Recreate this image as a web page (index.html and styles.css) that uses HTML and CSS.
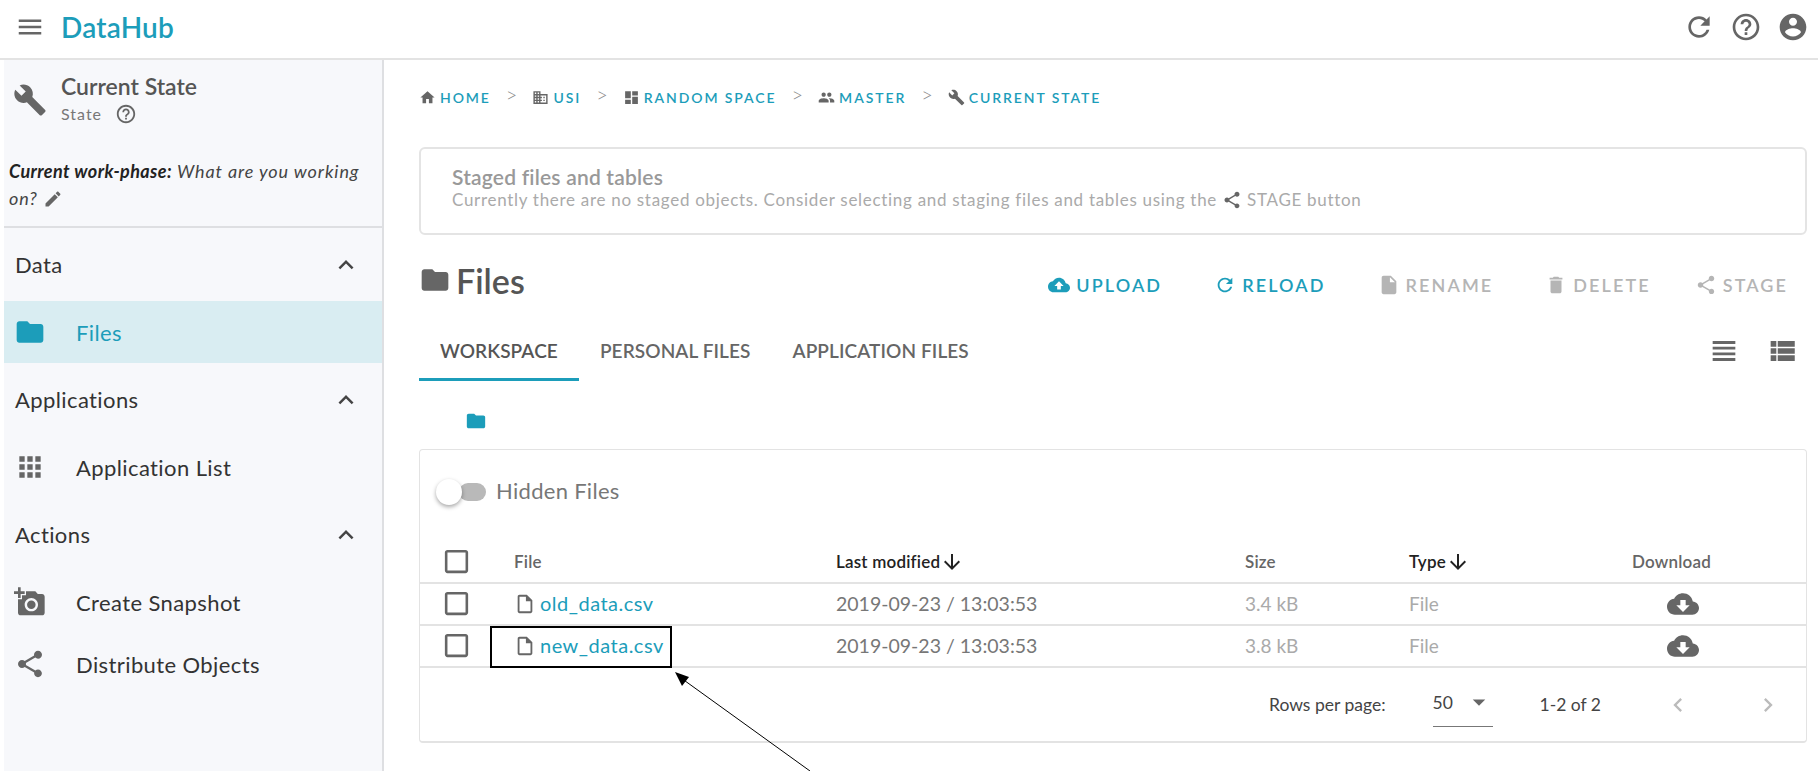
FILE: index.html
```html
<!DOCTYPE html>
<html>
<head>
    <title>DataHub</title>
    <link rel="stylesheet" href="styles.css">
</head>
<body>
    <svg class="sprite" xmlns="http://www.w3.org/2000/svg">
        <symbol id="i-menu" viewBox="0 0 24 24"><path d="M3 18h18v-2H3v2zm0-5h18v-2H3v2zm0-7v2h18V6H3z"/></symbol>
        <symbol id="i-refresh" viewBox="0 0 24 24"><path d="M17.65 6.35C16.2 4.9 14.21 4 12 4c-4.42 0-7.99 3.58-7.99 8s3.57 8 7.99 8c3.73 0 6.84-2.55 7.73-6h-2.08c-.82 2.33-3.04 4-5.65 4-3.31 0-6-2.69-6-6s2.69-6 6-6c1.66 0 3.14.69 4.22 1.78L13 11h7V4l-2.35 2.35z"/></symbol>
        <symbol id="i-help" viewBox="0 0 24 24"><path d="M11 18h2v-2h-2v2zm1-16C6.48 2 2 6.48 2 12s4.48 10 10 10 10-4.48 10-10S17.52 2 12 2zm0 18c-4.41 0-8-3.59-8-8s3.59-8 8-8 8 3.59 8 8-3.59 8-8 8zm0-14c-2.21 0-4 1.79-4 4h2c0-1.1.9-2 2-2s2 .9 2 2c0 2-3 1.75-3 5h2c0-2.25 3-2.5 3-5 0-2.21-1.79-4-4-4z"/></symbol>
        <symbol id="i-account" viewBox="0 0 24 24"><path d="M12 2C6.48 2 2 6.48 2 12s4.48 10 10 10 10-4.48 10-10S17.52 2 12 2zm0 3c1.66 0 3 1.34 3 3s-1.34 3-3 3-3-1.34-3-3 1.34-3 3-3zm0 14.2c-2.5 0-4.71-1.28-6-3.22.03-1.99 4-3.08 6-3.08 1.99 0 5.97 1.09 6 3.08-1.29 1.94-3.5 3.22-6 3.22z"/></symbol>
        <symbol id="i-build" viewBox="0 0 24 24"><path d="M22.7 19l-9.1-9.1c.9-2.3.4-5-1.5-6.9-2-2-5-2.4-7.4-1.3L9 6 6 9 1.6 4.7C.4 7.1.9 10.1 2.9 12.1c1.9 1.9 4.6 2.4 6.9 1.5l9.1 9.1c.4.4 1 .4 1.4 0l2.3-2.3c.5-.4.5-1.1.1-1.4z"/></symbol>
        <symbol id="i-edit" viewBox="0 0 24 24"><path d="M3 17.25V21h3.75L17.81 9.94l-3.75-3.75L3 17.25zM20.71 7.04c.39-.39.39-1.02 0-1.41l-2.34-2.34c-.39-.39-1.02-.39-1.41 0l-1.83 1.83 3.75 3.75 1.83-1.83z"/></symbol>
        <symbol id="i-less" viewBox="0 0 24 24"><path d="M12 8l-6 6 1.41 1.41L12 10.83l4.59 4.58L18 14z"/></symbol>
        <symbol id="i-folder" viewBox="0 0 24 24"><path d="M10 4H4c-1.1 0-1.99.9-1.99 2L2 18c0 1.1.9 2 2 2h16c1.1 0 2-.9 2-2V8c0-1.1-.9-2-2-2h-8l-2-2z"/></symbol>
        <symbol id="i-apps" viewBox="0 0 24 24"><path d="M4 8h4V4H4v4zm6 12h4v-4h-4v4zm-6 0h4v-4H4v4zm0-6h4v-4H4v4zm6 0h4v-4h-4v4zm6-10v4h4V4h-4zm-6 4h4V4h-4v4zm6 6h4v-4h-4v4zm0 6h4v-4h-4v4z"/></symbol>
        <symbol id="i-photo" viewBox="0 0 24 24"><path d="M3 4V1h2v3h3v2H5v3H3V6H0V4h3zm3 6V7h3V4h7l1.83 2H21c1.1 0 2 .9 2 2v12c0 1.1-.9 2-2 2H5c-1.1 0-2-.9-2-2V10h3zm7 9c2.76 0 5-2.24 5-5s-2.24-5-5-5-5 2.24-5 5 2.24 5 5 5zm-3.2-5c0 1.77 1.43 3.2 3.2 3.2s3.2-1.43 3.2-3.2-1.43-3.2-3.2-3.2-3.2 1.43-3.2 3.2z"/></symbol>
        <symbol id="i-share" viewBox="0 0 24 24"><path d="M18 16.08c-.76 0-1.44.3-1.96.77L8.91 12.7c.05-.23.09-.46.09-.7s-.04-.47-.09-.7l7.05-4.11c.54.5 1.25.81 2.04.81 1.66 0 3-1.34 3-3s-1.34-3-3-3-3 1.34-3 3c0 .24.04.47.09.7L8.04 9.81C7.5 9.31 6.79 9 6 9c-1.66 0-3 1.34-3 3s1.34 3 3 3c.79 0 1.5-.31 2.04-.81l7.12 4.16c-.05.21-.08.43-.08.65 0 1.61 1.31 2.92 2.92 2.92 1.61 0 2.92-1.31 2.92-2.92s-1.31-2.92-2.92-2.92z"/></symbol>
        <symbol id="i-home" viewBox="0 0 24 24"><path d="M10 20v-6h4v6h5v-8h3L12 3 2 12h3v8z"/></symbol>
        <symbol id="i-domain" viewBox="0 0 24 24"><path d="M12 7V3H2v18h20V7H12zM6 19H4v-2h2v2zm0-4H4v-2h2v2zm0-4H4V9h2v2zm0-4H4V5h2v2zm4 12H8v-2h2v2zm0-4H8v-2h2v2zm0-4H8V9h2v2zm0-4H8V5h2v2zm10 12h-8v-2h2v-2h-2v-2h2v-2h-2V9h8v10zm-2-8h-2v2h2v-2zm0 4h-2v2h2v-2z"/></symbol>
        <symbol id="i-dashboard" viewBox="0 0 24 24"><path d="M3 13h8V3H3v10zm0 8h8v-6H3v6zm10 0h8V11h-8v10zm0-18v6h8V3h-8z"/></symbol>
        <symbol id="i-people" viewBox="0 0 24 24"><path d="M16 11c1.66 0 2.99-1.34 2.99-3S17.66 5 16 5c-1.66 0-3 1.34-3 3s1.34 3 3 3zm-8 0c1.66 0 2.99-1.34 2.99-3S9.66 5 8 5C6.34 5 5 6.34 5 8s1.34 3 3 3zm0 2c-2.33 0-7 1.17-7 3.5V19h14v-2.5c0-2.33-4.67-3.5-7-3.5zm8 0c-.29 0-.62.02-.97.05 1.16.84 1.97 1.97 1.97 3.45V19h6v-2.5c0-2.33-4.67-3.5-7-3.5z"/></symbol>
        <symbol id="i-upload" viewBox="0 0 24 24"><path d="M19.35 10.04C18.67 6.59 15.64 4 12 4 9.11 4 6.6 5.64 5.35 8.04 2.34 8.36 0 10.91 0 14c0 3.31 2.69 6 6 6h13c2.76 0 5-2.24 5-5 0-2.64-2.05-4.78-4.65-4.96zM14 13v4h-4v-4H7l5-5 5 5h-3z"/></symbol>
        <symbol id="i-download" viewBox="0 0 24 24"><path d="M19.35 10.04C18.67 6.59 15.64 4 12 4 9.11 4 6.6 5.64 5.35 8.04 2.34 8.36 0 10.91 0 14c0 3.31 2.69 6 6 6h13c2.76 0 5-2.24 5-5 0-2.64-2.05-4.78-4.65-4.96zM17 13l-5 5-5-5h3V9h4v4h3z"/></symbol>
        <symbol id="i-file" viewBox="0 0 24 24"><path d="M6 2c-1.1 0-1.99.9-1.99 2L4 20c0 1.1.89 2 1.99 2H18c1.1 0 2-.9 2-2V8l-6-6H6zm7 7V3.5L18.5 9H13z"/></symbol>
        <symbol id="i-file-line" viewBox="0 0 24 24"><path d="M14 2H6c-1.1 0-1.99.9-1.99 2L4 20c0 1.1.89 2 1.99 2H18c1.1 0 2-.9 2-2V8l-6-6zM6 20V4h7v5h5v11H6z"/></symbol>
        <symbol id="i-delete" viewBox="0 0 24 24"><path d="M6 19c0 1.1.9 2 2 2h8c1.1 0 2-.9 2-2V7H6v12zM19 4h-3.5l-1-1h-5l-1 1H5v2h14V4z"/></symbol>
        <symbol id="i-headline" viewBox="0 0 24 24"><path d="M4 15h16v-2H4v2zm0 4h16v-2H4v2zm0-8h16V9H4v2zm0-6v2h16V5H4z"/></symbol>
        <symbol id="i-list" viewBox="0 0 24 24"><path d="M4 14h4v-4H4v4zm0 5h4v-4H4v4zM4 9h4V5H4v4zm5 5h12v-4H9v4zm0 5h12v-4H9v4zM9 5v4h12V5H9z"/></symbol>
        <symbol id="i-check" viewBox="0 0 24 24"><path d="M19 5v14H5V5h14m0-2H5c-1.1 0-2 .9-2 2v14c0 1.1.9 2 2 2h14c1.1 0 2-.9 2-2V5c0-1.1-.9-2-2-2z"/></symbol>
        <symbol id="i-arrow-down" viewBox="0 0 24 24"><path d="M20 12l-1.41-1.41L13 16.17V4h-2v12.17l-5.58-5.59L4 12l8 8 8-8z"/></symbol>
        <symbol id="i-caret" viewBox="0 0 24 24"><path d="M7 10l5 5 5-5z"/></symbol>
        <symbol id="i-prev" viewBox="0 0 24 24"><path d="M15.41 7.41L14 6l-6 6 6 6 1.41-1.41L10.83 12z"/></symbol>
        <symbol id="i-next" viewBox="0 0 24 24"><path d="M10 6L8.59 7.41 13.17 12l-4.58 4.59L10 18l6-6z"/></symbol>
    </svg>

    <header class="topbar">
        <svg class="icon menu-icon"><use href="#i-menu"/></svg>
        <span class="brand">DataHub</span>
        <div class="top-actions">
            <svg class="icon"><use href="#i-refresh"/></svg>
            <svg class="icon"><use href="#i-help"/></svg>
            <svg class="icon"><use href="#i-account"/></svg>
        </div>
    </header>

    <div class="layout">
        <aside class="sidebar">
            <div class="side-head">
                <div class="side-title">
                    <svg class="icon wrench"><use href="#i-build"/></svg>
                    <div>
                        <div class="state-name">Current State</div>
                        <div class="state-kind">State <svg class="icon state-help"><use href="#i-help"/></svg></div>
                    </div>
                </div>
                <p class="work-phase"><b>Current work-phase:</b> What are you working on? <svg class="icon edit-icon"><use href="#i-edit"/></svg></p>
            </div>

            <div class="nav-group">Data <svg class="icon"><use href="#i-less"/></svg></div>
            <div class="nav-item active"><svg class="icon"><use href="#i-folder"/></svg> Files</div>
            <div class="nav-group">Applications <svg class="icon"><use href="#i-less"/></svg></div>
            <div class="nav-item"><svg class="icon"><use href="#i-apps"/></svg> Application List</div>
            <div class="nav-group">Actions <svg class="icon"><use href="#i-less"/></svg></div>
            <div class="nav-item"><svg class="icon"><use href="#i-photo"/></svg> Create Snapshot</div>
            <div class="nav-item"><svg class="icon"><use href="#i-share"/></svg> Distribute Objects</div>
        </aside>

        <main class="content">
            <nav class="crumbs">
                <a class="crumb"><svg class="icon"><use href="#i-home"/></svg>HOME</a>
                <span class="sep">&gt;</span>
                <a class="crumb"><svg class="icon"><use href="#i-domain"/></svg>USI</a>
                <span class="sep">&gt;</span>
                <a class="crumb"><svg class="icon"><use href="#i-dashboard"/></svg>RANDOM SPACE</a>
                <span class="sep">&gt;</span>
                <a class="crumb"><svg class="icon"><use href="#i-people"/></svg>MASTER</a>
                <span class="sep">&gt;</span>
                <a class="crumb"><svg class="icon"><use href="#i-build"/></svg>CURRENT STATE</a>
            </nav>

            <section class="staged">
                <h3>Staged files and tables</h3>
                <p>Currently there are no staged objects. Consider selecting and staging files and tables using the <svg class="icon"><use href="#i-share"/></svg> STAGE button</p>
            </section>

            <div class="files-head">
                <h1><svg class="icon"><use href="#i-folder"/></svg>Files</h1>
                <div class="file-actions">
                    <button class="on"><svg class="icon"><use href="#i-upload"/></svg>UPLOAD</button>
                    <button class="on"><svg class="icon"><use href="#i-refresh"/></svg>RELOAD</button>
                    <button><svg class="icon"><use href="#i-file"/></svg>RENAME</button>
                    <button><svg class="icon"><use href="#i-delete"/></svg>DELETE</button>
                    <button><svg class="icon"><use href="#i-share"/></svg>STAGE</button>
                </div>
            </div>

            <div class="tabs">
                <span class="tab selected">WORKSPACE</span>
                <span class="tab">PERSONAL FILES</span>
                <span class="tab">APPLICATION FILES</span>
                <div class="views">
                    <svg class="icon"><use href="#i-headline"/></svg>
                    <svg class="icon"><use href="#i-list"/></svg>
                </div>
            </div>

            <div class="path"><svg class="icon"><use href="#i-folder"/></svg></div>

            <section class="card">
                <div class="hidden-toggle">
                    <span class="switch"><span class="knob"></span></span>
                    Hidden Files
                </div>
                <table class="file-table">
                    <colgroup>
                        <col class="c-check"><col class="c-file"><col class="c-date"><col class="c-size"><col class="c-type"><col>
                    </colgroup>
                    <thead>
                        <tr>
                            <th><svg class="icon box"><use href="#i-check"/></svg></th>
                            <th>File</th>
                            <th class="sorted">Last modified<svg class="icon"><use href="#i-arrow-down"/></svg></th>
                            <th>Size</th>
                            <th class="sorted">Type<svg class="icon"><use href="#i-arrow-down"/></svg></th>
                            <th>Download</th>
                        </tr>
                    </thead>
                    <tbody>
                        <tr>
                            <td><svg class="icon box"><use href="#i-check"/></svg></td>
                            <td class="name"><svg class="icon"><use href="#i-file-line"/></svg><a>old_data.csv</a></td>
                            <td class="date">2019-09-23 / 13:03:53</td>
                            <td>3.4 kB</td>
                            <td>File</td>
                            <td><svg class="icon dl"><use href="#i-download"/></svg></td>
                        </tr>
                        <tr>
                            <td><svg class="icon box"><use href="#i-check"/></svg></td>
                            <td class="name"><svg class="icon"><use href="#i-file-line"/></svg><a>new_data.csv</a></td>
                            <td class="date">2019-09-23 / 13:03:53</td>
                            <td>3.8 kB</td>
                            <td>File</td>
                            <td><svg class="icon dl"><use href="#i-download"/></svg></td>
                        </tr>
                    </tbody>
                </table>
                <div class="pager">
                    <span>Rows per page:</span>
                    <span class="per-page">50 <svg class="icon"><use href="#i-caret"/></svg></span>
                    <span class="range">1-2 of 2</span>
                    <svg class="icon page-btn"><use href="#i-prev"/></svg>
                    <svg class="icon page-btn"><use href="#i-next"/></svg>
                </div>
            </section>
        </main>
    </div>

    <!-- annotation drawn over the screenshot -->
    <div class="callout-box"></div>
    <svg class="callout-arrow" width="1818" height="771">
        <line x1="810" y1="771" x2="681" y2="678" stroke="#000" stroke-width="1"/>
        <polygon points="675,672 689,677 682,686" fill="#000"/>
    </svg>
</body>
</html>
```

FILE: styles.css
```css
* {
    box-sizing: border-box;
}

html, body {
    height: 771px;
    overflow: hidden;
}

body {
    margin: 0;
    font-family: 'Lato', 'Open Sans', sans-serif;
    color: #444;
    background: #fff;
}

.sprite {
    display: none;
}

.icon {
    width: 24px;
    height: 24px;
    fill: #666;
    flex: none;
}

/* top bar */
.topbar {
    display: flex;
    align-items: center;
    height: 60px;
    padding: 0 9px 4px 15px;
    border-bottom: 2px solid #e3e3e3;
}

.menu-icon {
    width: 30px;
    height: 30px;
}

.brand {
    margin-left: 16px;
    font-size: 28px;
    font-weight: 600;
    letter-spacing: 0.2px;
    color: #1c9dba;
}

.top-actions {
    display: flex;
    gap: 15px;
    margin-left: auto;
}

.top-actions .icon {
    width: 32px;
    height: 32px;
}

/* sidebar */
.layout {
    display: flex;
    height: 711px;
}

.sidebar {
    width: 380px;
    margin-left: 4px;
    background: #f7f8fb;
    border-right: 2px solid #dedfe2;
    flex: none;
}

.side-head {
    height: 168px;
    border-bottom: 2px solid #dedfe2;
    padding: 12px 0 0 5px;
}

.side-title {
    display: flex;
    align-items: center;
    gap: 14px;
    padding-left: 4px;
}

.wrench {
    width: 34px;
    height: 34px;
}

.state-name {
    font-size: 23px;
    font-weight: 600;
    color: #555;
    line-height: 28px;
}

.state-kind {
    display: flex;
    align-items: center;
    gap: 13px;
    font-size: 16px;
    letter-spacing: 1px;
    color: #777;
    line-height: 28px;
}

.state-help {
    width: 22px;
    height: 22px;
}

.work-phase {
    margin: 30px 0 0;
    font-size: 18px;
    line-height: 27px;
    font-style: italic;
    letter-spacing: 0.9px;
    color: #444;
}

.work-phase b {
    letter-spacing: 0.4px;
    color: #222;
}

.edit-icon {
    width: 20px;
    height: 20px;
    vertical-align: -4px;
}

.nav-group {
    display: flex;
    align-items: center;
    justify-content: space-between;
    height: 73px;
    padding: 0 21px 0 11px;
    font-size: 22px;
    letter-spacing: 0.4px;
    color: #333;
}

.nav-group .icon {
    width: 30px;
    height: 30px;
    fill: #444;
}

.nav-item {
    display: flex;
    align-items: center;
    gap: 28px;
    height: 62px;
    padding-left: 8px;
    font-size: 22px;
    letter-spacing: 0.4px;
    color: #333;
}

.nav-item .icon {
    width: 36px;
    height: 32px;
}

.nav-item.active {
    background: #d9edf2;
    color: #1c9dba;
}

.nav-item.active .icon {
    fill: #1c9dba;
}

/* main column */
.content {
    flex: 1;
    padding: 27px 11px 0 35px;
    min-width: 0;
}

.crumbs {
    display: flex;
    align-items: center;
    height: 20px;
}

.crumb {
    display: flex;
    align-items: center;
    gap: 4px;
    font-size: 14px;
    font-weight: 600;
    letter-spacing: 1.9px;
    color: #1c9dba;
}

.crumb .icon {
    width: 17px;
    height: 17px;
}

.sep {
    margin: -6px 15px 0;
    font-size: 20px;
    font-weight: 300;
    color: #888;
}

.staged {
    height: 88px;
    margin-top: 40px;
    padding: 16px 31px;
    border: 2px solid #e4e4e4;
    border-radius: 6px;
}

.staged h3 {
    margin: 0;
    font-size: 21px;
    line-height: 24px;
    font-weight: 600;
    letter-spacing: 0.2px;
    color: #999;
}

.staged p {
    display: flex;
    align-items: center;
    gap: 5px;
    margin: 0;
    font-size: 17px;
    line-height: 22px;
    letter-spacing: 0.7px;
    color: #aaa;
}

.staged .icon {
    width: 20px;
    height: 20px;
}

.files-head {
    display: flex;
    align-items: center;
    height: 44px;
    margin-top: 28px;
}

.files-head h1 {
    display: flex;
    align-items: center;
    gap: 5px;
    margin: -10px 0 0;
    font-size: 34px;
    font-weight: 600;
    color: #555;
}

.files-head h1 .icon {
    width: 32px;
    height: 32px;
}

.file-actions {
    display: flex;
    gap: 52px;
    margin-left: auto;
    padding-right: 19px;
}

.file-actions button {
    display: flex;
    align-items: center;
    gap: 6px;
    padding: 0;
    border: none;
    background: none;
    font-family: inherit;
    font-size: 18px;
    font-weight: 600;
    letter-spacing: 2.1px;
    color: #b5b5b5;
}

.file-actions button:last-child {
    margin-left: -8px;
}

.file-actions .icon {
    width: 22px;
    height: 22px;
    fill: #b5b5b5;
}

.file-actions .on {
    color: #1c9dba;
}

.file-actions .on .icon {
    fill: #1c9dba;
}

.tabs {
    display: flex;
    align-items: stretch;
    height: 61px;
    margin-top: 13px;
}

.tab {
    display: flex;
    align-items: center;
    padding: 0 21px;
    font-size: 19px;
    font-weight: 600;
    letter-spacing: 0.1px;
    color: #666;
}

.tab.selected {
    color: #555;
    padding-top: 3px;
    border-bottom: 3px solid #1c9dba;
}

.views {
    display: flex;
    align-items: center;
    gap: 24px;
    margin-left: auto;
    padding-right: 8px;
}

.views .icon {
    width: 34px;
    height: 34px;
}

.path {
    display: flex;
    align-items: center;
    height: 68px;
    padding: 12px 0 0 46px;
}

.path .icon {
    width: 22px;
    height: 22px;
    fill: #1c9dba;
}

.card {
    height: 294px;
    border: 1px solid #e3e3e3;
    border-bottom-width: 2px;
    border-radius: 4px;
}

.hidden-toggle {
    display: flex;
    align-items: center;
    height: 90px;
    padding: 0 0 10px 76px;
    position: relative;
    font-size: 22px;
    letter-spacing: 0.3px;
    color: #777;
}

.switch {
    position: absolute;
    left: 39px;
    top: 33px;
    width: 27px;
    height: 18px;
    border-radius: 9px;
    background: #b9b9b9;
}

.knob {
    position: absolute;
    left: -23px;
    top: -4px;
    width: 26px;
    height: 26px;
    border-radius: 50%;
    background: #fff;
    box-shadow: 0 2px 4px rgba(0, 0, 0, 0.35);
}

.file-table {
    width: 100%;
    table-layout: fixed;
    border-collapse: collapse;
    font-size: 19px;
}

.c-check { width: 94px; }
.c-file { width: 322px; }
.c-date { width: 409px; }
.c-size { width: 164px; }
.c-type { width: 223px; }

.file-table th {
    height: 43px;
    padding: 0;
    text-align: left;
    font-size: 17px;
    font-weight: 600;
    letter-spacing: 0.2px;
    color: #666;
}

.file-table th.sorted {
    color: #222;
}

.file-table th.sorted .icon {
    width: 24px;
    height: 24px;
    margin: -6px 0;
    fill: #222;
    vertical-align: 0;
}

.file-table td {
    height: 42px;
    padding: 0 0 1px;
    color: #aaa;
}

.file-table tr {
    border-bottom: 2px solid #e3e3e3;
}

.file-table td.date {
    font-size: 19.5px;
    color: #777;
}

.file-table .box {
    display: block;
    width: 31px;
    height: 31px;
    margin-left: 21px;
}

.file-table td.name {
    padding-bottom: 3px;
    white-space: nowrap;
}

.name .icon {
    width: 22px;
    height: 22px;
    margin-right: 4px;
    vertical-align: -4px;
}

.name a {
    font-size: 20px;
    letter-spacing: 0.5px;
    color: #1c9dba;
}

.dl {
    display: block;
    width: 32px;
    height: 32px;
    margin-left: 35px;
}

.pager {
    display: flex;
    align-items: center;
    height: 73px;
    justify-content: flex-end;
    padding-right: 24px;
    font-size: 17.5px;
    color: #444;
}

.per-page {
    display: flex;
    align-items: center;
    justify-content: space-between;
    width: 60px;
    height: 44px;
    padding-bottom: 4px;
    margin: 0 47px 0 47px;
    border-bottom: 1px solid #777;
}

.per-page .icon {
    width: 30px;
    height: 30px;
    margin-right: -1px;
}

.range {
    margin-right: 63px;
}

.page-btn {
    fill: #bbb;
    width: 28px;
    height: 28px;
}

.page-btn + .page-btn {
    margin-left: 62px;
}

/* annotation */
.callout-box {
    position: absolute;
    left: 490px;
    top: 626px;
    width: 182px;
    height: 42px;
    border: 2px solid #000;
}

.callout-arrow {
    position: absolute;
    left: 0;
    top: 0;
    pointer-events: none;
}
```
